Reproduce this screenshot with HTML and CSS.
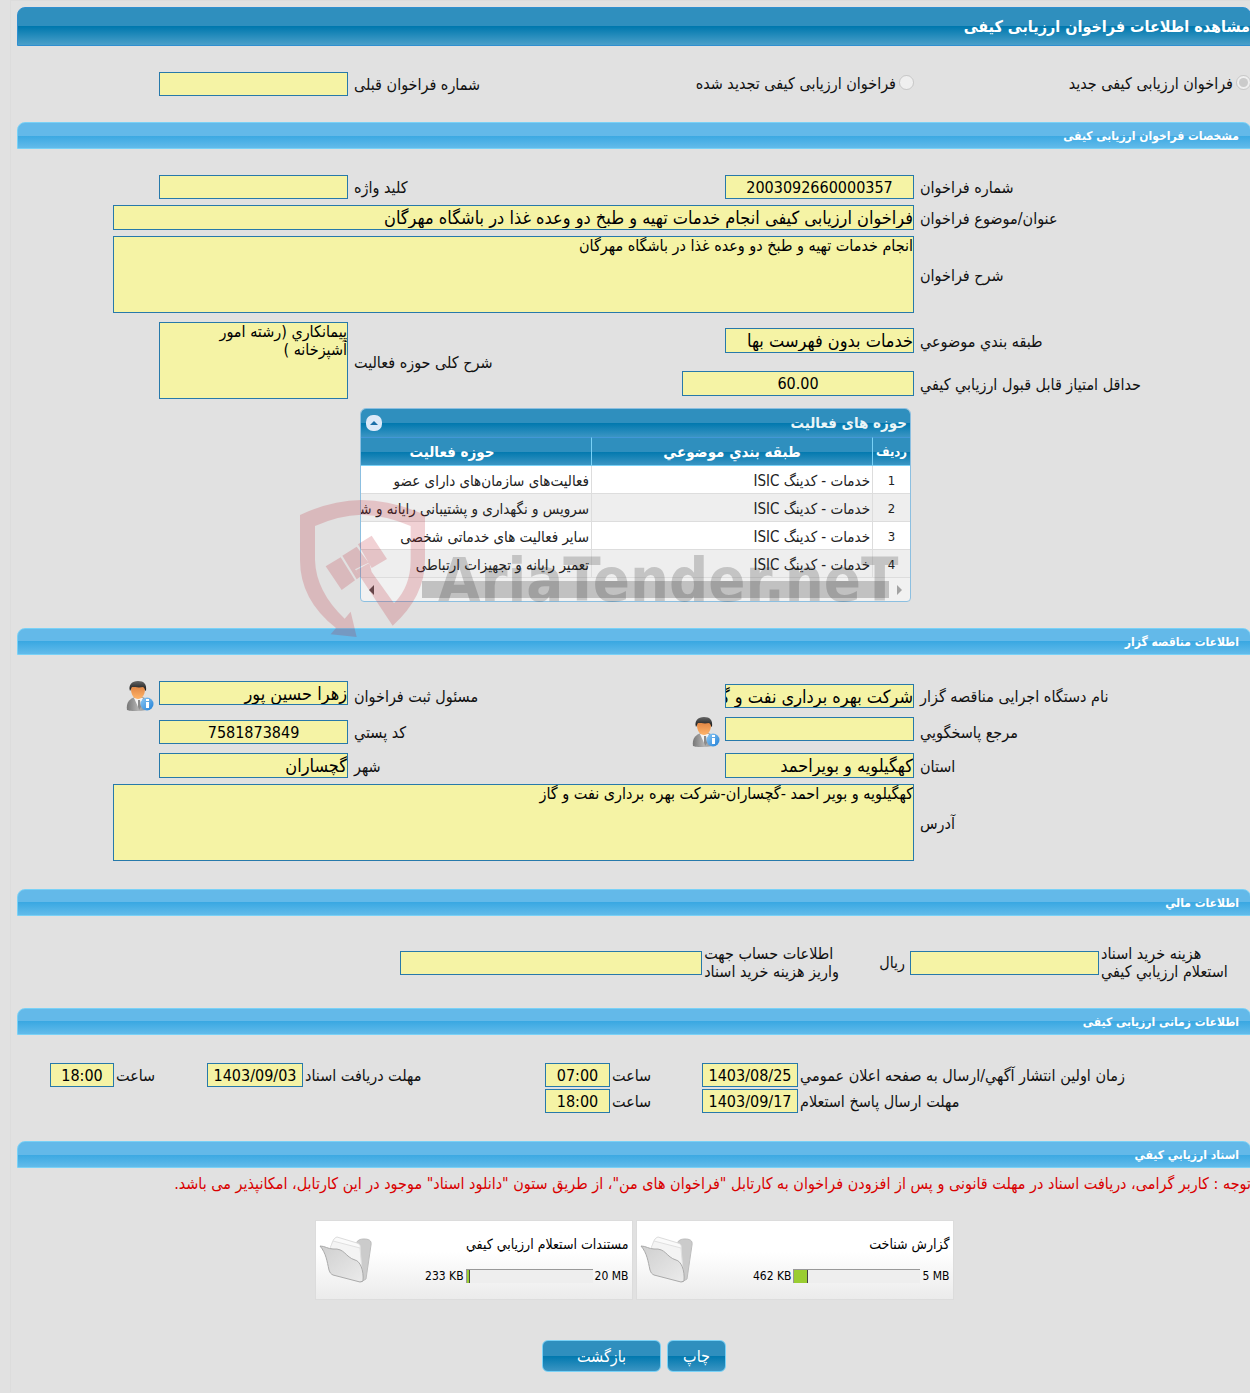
FILE: index.html
```html
<!DOCTYPE html>
<html lang="fa" dir="rtl">
<head>
    <meta charset="UTF-8">
    <meta name="viewport" content="width=device-width, initial-scale=1.0">
    <title>مشاهده اطلاعات فراخوان ارزیابی کیفی</title>
    <link rel="stylesheet" href="styles.css">
</head>
<body>
    <svg class="defs" width="0" height="0" aria-hidden="true">
        <defs>
            <linearGradient id="suit" x1="0" y1="0" x2="1" y2="0">
                <stop offset="0" stop-color="#777"/><stop offset="0.5" stop-color="#b5b5b5"/><stop offset="1" stop-color="#777"/>
            </linearGradient>
            <linearGradient id="hair" x1="0" y1="0" x2="0" y2="1">
                <stop offset="0" stop-color="#666"/><stop offset="1" stop-color="#111"/>
            </linearGradient>
            <linearGradient id="skin" x1="0" y1="0" x2="0" y2="1">
                <stop offset="0" stop-color="#d9793a"/><stop offset="1" stop-color="#ffb469"/>
            </linearGradient>
            <linearGradient id="info" x1="0" y1="0" x2="1" y2="1">
                <stop offset="0" stop-color="#8fcaf5"/><stop offset="1" stop-color="#1f7fd6"/>
            </linearGradient>
            <linearGradient id="fold" x1="0" y1="0" x2="1" y2="1">
                <stop offset="0" stop-color="#cfcfcf"/><stop offset="1" stop-color="#ebebeb"/>
            </linearGradient>
            <symbol id="person" viewBox="0 0 28 30">
                <path d="M1 29C0 22 3 18 9 16h7c5 1 8 5 8 12-6 2-18 3-23 1z" fill="url(#suit)"/>
                <path d="M8 17l5 11 4-11z" fill="#f4f4f4"/>
                <path d="M12 19h2l1 7-2 3-1-3z" fill="#8b8b8b"/>
                <path d="M5 8c0-4 3-6 7-6s7 2 7 6c0 6-3 10-7 10S5 14 5 8z" fill="url(#skin)"/>
                <path d="M4 10C2 4 6 0 12 0s9 3 8 10c-1 0-1-3-3-4-4 1-8 0-11 0-1 1-1 3-2 4z" fill="url(#hair)"/>
                <circle cx="21" cy="23" r="6.500" fill="url(#info)"/>
                <path d="M20 18h3v2h-3zM20 21h3v6h-3z" fill="#fff"/>
            </symbol>
            <symbol id="folder" viewBox="0 0 54 48">
                <path d="M36 8c3-4 5-5 9-5s8 1 7 6l-5 34-5 3-10-8z" fill="#cbcbcb" stroke="#bdbdbd"/>
                <path d="M13 10c0-5 2-8 5-9l20 6c3 1 4 3 3 6l-1 18z" fill="#fafafa" stroke="#dcdcdc"/>
                <path d="M11 12l3-7 27 7 2 22z" fill="#f4f4f4" stroke="#e0e0e0"/>
                <path d="M1 10c5 0 8 3 13 3 12-1 12 8 22 11 5 1 9 10 8 21l-3 1-27-7c-2-1-3-2-4-5-2-9-3-17-9-24z" fill="url(#fold)" stroke="#aaa"/>
            </symbol>
        </defs>
    </svg>

    <main class="panel">
        <h1 class="page-title">مشاهده اطلاعات فراخوان ارزیابی کیفی</h1>

        <div class="section-body form-grid">
            <div class="radio-item">
                <input type="radio" name="callType" id="callNew" checked disabled>
                <label for="callNew">فراخوان ارزیابی کیفی جدید</label>
            </div>
            <div class="radio-item">
                <input type="radio" name="callType" id="callRenewed" disabled>
                <label for="callRenewed">فراخوان ارزیابی کیفی تجدید شده</label>
            </div>
            <label for="prevNumber">شماره فراخوان قبلی</label>
            <div class="field"><input type="text" id="prevNumber" readonly></div>
        </div>

        <h2 class="section-title">مشخصات فراخوان ارزیابی کیفی</h2>
        <div class="section-body">
            <div class="form-grid">
                <label for="callNumber">شماره فراخوان</label>
                <div class="field"><input type="text" id="callNumber" class="number" value="2003092660000357" readonly></div>
                <label for="keyword">کلید واژه</label>
                <div class="field"><input type="text" id="keyword" readonly></div>

                <label for="subject">عنوان/موضوع فراخوان</label>
                <div class="field wide"><input type="text" id="subject" class="tall" value="فراخوان ارزیابی کیفی انجام خدمات تهیه و طبخ دو وعده غذا در باشگاه مهرگان" readonly></div>

                <label for="description">شرح فراخوان</label>
                <div class="field wide"><textarea id="description" readonly>انجام خدمات تهیه و طبخ دو وعده غذا در باشگاه مهرگان</textarea></div>
            </div>
            <div class="form-grid activity-grid">
                <label for="category">طبقه بندي موضوعي</label>
                <div class="field"><input type="text" id="category" class="tall" value="خدمات بدون فهرست بها" readonly></div>
                <label for="activity" class="two-rows">شرح کلی حوزه فعالیت</label>
                <div class="field two-rows"><textarea id="activity" readonly>پیمانکاري (رشته امور
آشپزخانه )</textarea></div>

                <label for="minScore">حداقل امتیاز قابل قبول ارزیابي کیفي</label>
                <div class="field"><input type="text" id="minScore" class="number score tall" value="60.00" readonly></div>

                <div class="activity-box">
                    <div class="box-title">
                        <span>حوزه های فعالیت</span>
                        <button type="button" class="collapse" aria-label="بستن">
                            <svg width="16" height="16" viewBox="0 0 16 16"><rect width="16" height="16" rx="7" fill="#dce9f8"/><path d="M4 10l4-4 4 4z" fill="#1b6fa8"/></svg>
                        </button>
                    </div>
                    <table>
                        <thead>
                            <tr><th class="col-row">ردیف</th><th class="col-cat">طبقه بندي موضوعي</th><th>حوزه فعالیت</th></tr>
                        </thead>
                        <tbody>
                            <tr><td>1</td><td>خدمات - کدینگ ISIC</td><td>فعالیت‌های سازمان‌های دارای عضو</td></tr>
                            <tr><td>2</td><td>خدمات - کدینگ ISIC</td><td>سرویس و نگهداری و پشتیبانی رایانه و شبکه</td></tr>
                            <tr><td>3</td><td>خدمات - کدینگ ISIC</td><td>سایر فعالیت های خدماتی شخصی</td></tr>
                            <tr><td>4</td><td>خدمات - کدینگ ISIC</td><td>تعمیر رایانه و تجهیزات ارتباطی</td></tr>
                        </tbody>
                    </table>
                    <div class="scrollbar">
                        <span class="arrow right"></span>
                        <span class="thumb"></span>
                        <span class="arrow left"></span>
                    </div>
                    <div class="watermark" dir="ltr" aria-hidden="true">
                        <svg width="140" height="147" viewBox="0 279 420 441" fill="#be1e2d">
                            <path d="M30 345Q120 302 215 300Q312 302 405 345V480Q405 590 308 677L198 511 238 489 245 516 312 610Q362 560 362 480V378Q290 346 215 344Q145 346 75 378V480Q78 575 164 656L182 635 200 711 122 703 138 684Q30 600 30 480z"/>
                            <path d="M107 499L152 472 195 541 155 570zM157 467L200 440 236 488 195 508 213 529 200 538zM204 433L245 407 291 477 245 504z"/>
                        </svg>
                        <span>AriaTender.neT</span>
                    </div>
                </div>
            </div>
        </div>

        <h2 class="section-title">اطلاعات مناقصه گزار</h2>
        <div class="section-body organizer">
            <div class="form-grid">
                <label for="orgName">نام دستگاه اجرایی مناقصه گزار</label>
                <div class="field"><input type="text" id="orgName" value="شرکت بهره برداری نفت و گاز گچساران" readonly></div>
                <label for="registrar">مسئول ثبت فراخوان</label>
                <div class="field with-icon">
                    <input type="text" id="registrar" value="زهرا حسین پور" readonly>
                    <svg class="person"><use href="#person"/></svg>
                </div>

                <label for="contact">مرجع پاسخگویي</label>
                <div class="field with-icon">
                    <input type="text" id="contact" readonly>
                    <svg class="person"><use href="#person"/></svg>
                </div>
                <label for="postCode">کد پستي</label>
                <div class="field"><input type="text" id="postCode" class="number" value="7581873849" readonly></div>

                <label for="province">استان</label>
                <div class="field"><input type="text" id="province" class="tall" value="کهگیلویه و بویراحمد" readonly></div>
                <label for="city">شهر</label>
                <div class="field"><input type="text" id="city" class="tall" value="گچساران" readonly></div>

                <label for="address">آدرس</label>
                <div class="field wide"><textarea id="address" readonly>کهگیلویه و بویر احمد -گچساران-شرکت بهره برداری نفت و گاز</textarea></div>
            </div>
        </div>

        <h2 class="section-title">اطلاعات مالي</h2>
        <div class="section-body finance">
            <label for="docCost">هزینه خرید اسناد<br>استعلام ارزیابي کیفي</label>
            <input type="text" id="docCost" readonly>
            <span class="unit">ریال</span>
            <label for="account">اطلاعات حساب جهت<br>واریز هزینه خرید اسناد</label>
            <input type="text" id="account" class="account" readonly>
        </div>

        <h2 class="section-title">اطلاعات زمانی ارزیابی کیفی</h2>
        <div class="section-body time-grid">
            <label for="publishDate">زمان اولین انتشار آگهي/ارسال به صفحه اعلان عمومي</label>
            <input type="text" id="publishDate" class="number" value="1403/08/25" readonly>
            <label for="publishHour">ساعت</label>
            <input type="text" id="publishHour" class="number" value="07:00" readonly>
            <label for="receiveDate">مهلت دریافت اسناد</label>
            <input type="text" id="receiveDate" class="number" value="1403/09/03" readonly>
            <label for="receiveHour">ساعت</label>
            <input type="text" id="receiveHour" class="number" value="18:00" readonly>

            <label for="replyDate" class="new-row">مهلت ارسال پاسخ استعلام</label>
            <input type="text" id="replyDate" class="number" value="1403/09/17" readonly>
            <label for="replyHour">ساعت</label>
            <input type="text" id="replyHour" class="number" value="18:00" readonly>
        </div>

        <h2 class="section-title">اسناد ارزیابي کیفي</h2>
        <p class="notice">توجه : کاربر گرامی، دریافت اسناد در مهلت قانونی و پس از افزودن فراخوان به کارتابل "فراخوان های من"، از طریق ستون "دانلود اسناد" موجود در این کارتابل، امکانپذیر می باشد.</p>

        <div class="documents">
            <div class="document">
                <div class="document-info">
                    <div class="document-name">گزارش شناخت</div>
                    <div class="usage">
                        <span>5 MB</span>
                        <div class="bar"><div class="bar-fill" style="width: 11%"></div></div>
                        <span>462 KB</span>
                    </div>
                </div>
                <svg class="folder"><use href="#folder"/></svg>
            </div>
            <div class="document">
                <div class="document-info">
                    <div class="document-name">مستندات استعلام ارزیابي کیفي</div>
                    <div class="usage">
                        <span>20 MB</span>
                        <div class="bar"><div class="bar-fill" style="width: 3%"></div></div>
                        <span>233 KB</span>
                    </div>
                </div>
                <svg class="folder"><use href="#folder"/></svg>
            </div>
        </div>

        <div class="actions">
            <button type="button" class="btn">چاپ</button>
            <button type="button" class="btn btn-back">بازگشت</button>
        </div>
    </main>
</body>
</html>
```

FILE: styles.css
```css
* {
    box-sizing: border-box;
}

body {
    margin: 0;
    padding-left: 10px;
    background-color: #e1e1e1;
    font-family: "DejaVu Sans Condensed", "DejaVu Sans", sans-serif;
    font-size: 16px;
    line-height: 18px;
    color: #111;
    overflow-x: hidden;
}

.defs {
    position: absolute;
}

.panel {
    margin-right: -1px;
    padding: 6px 0 20px 6px;
    border: 1px solid #dcdcdc;
    border-right: none;
    border-bottom: none;
}

.page-title {
    margin: 0;
    height: 39px;
    border: 1px solid #2f8fd0;
    border-radius: 8px 8px 0 0;
    background: linear-gradient(#2f8fbe 50%, #0078ae 50%, #4a9fc9);
    color: #fff;
    font-size: 16px;
    line-height: 37px;
}

.section-title {
    margin: 0;
    padding-right: 11px;
    height: 27px;
    border: 1px solid #79d1f6;
    border-radius: 8px 8px 0 0;
    background: linear-gradient(#63b9e9 50%, #3aa8e2 50%, #62bbea);
    color: #fff;
    font-size: 12px;
    line-height: 27px;
}

.section-body {
    padding: 26px 0;
}

.organizer {
    padding-bottom: 28px;
}

/* label / field / label / field */
.form-grid {
    display: grid;
    grid-template-columns: 337fr 414fr 152fr 331fr;
    row-gap: 6px;
    align-items: center;
}

.form-grid label,
.time-grid label {
    text-align: left;
    white-space: nowrap;
}

.form-grid > label {
    padding-top: 2px;
    padding-left: 6px;
}

.radio-item {
    display: flex;
    gap: 3px;
}

.radio-item input {
    margin: 0;
    width: 15px;
    height: 15px;
}

.field.wide {
    grid-column: 2 / 5;
}

input[type="text"],
textarea {
    display: block;
    width: 189px;
    height: 24px;
    margin: 0;
    padding: 0;
    border: 1px solid #2779aa;
    border-radius: 0;
    background-color: #f5f3a5;
    color: #000;
    font-family: inherit;
    font-size: 18px;
    outline: none;
}

textarea {
    height: 77px;
    font-size: 16px;
    line-height: 18px;
    resize: none;
    overflow: hidden;
}

input[type="text"].number {
    font-size: 16px;
    text-align: center;
}

input[type="text"].tall {
    height: 25px;
}

input[type="text"].score {
    width: 232px;
}

.wide input[type="text"],
.wide textarea {
    width: 801px;
    max-width: 100%;
}

.activity-grid {
    margin-top: 9px;
    grid-template-rows: 37px 37px auto;
}

.two-rows {
    grid-row: 1 / 3;
}

label.two-rows {
    grid-column: 3;
}

.field.two-rows {
    grid-column: 4;
    align-self: start;
}

.with-icon {
    display: flex;
    gap: 5px;
}

.person {
    width: 28px;
    height: 30px;
}

/* activity table */
.activity-box {
    grid-column: 2 / 5;
    position: relative;
    width: 551px;
    margin-right: 3px;
    border: 1px solid #8cbfe0;
    border-radius: 6px 6px 4px 4px;
    background-color: #f1f1f1;
}

.box-title {
    display: flex;
    justify-content: space-between;
    align-items: center;
    height: 28px;
    padding: 0 3px 0 5px;
    border-radius: 5px 5px 0 0;
    background: linear-gradient(#2f8fbe 50%, #0078ae 50%, #3b95c3);
    color: #eaf5f7;
    font-size: 15px;
    font-weight: bold;
}

.collapse {
    width: 16px;
    height: 16px;
    padding: 0;
    border: none;
    background: none;
}

.collapse svg {
    display: block;
}

table {
    width: 100%;
    table-layout: fixed;
    border-collapse: separate;
    border-spacing: 0;
    font-size: 15px;
}

th {
    height: 29px;
    padding: 0;
    border-top: 1px solid #4297d7;
    border-bottom: 1px solid #79d1f6;
    border-left: 1px solid #79d1f6;
    background: linear-gradient(#2f8fbe 50%, #0078ae 50%, #3b95c3);
    color: #fff;
    font-size: 15px;
}

th.col-row {
    width: 38px;
    font-size: 13px;
}

.col-cat {
    width: 281px;
}

th:last-child,
td:last-child {
    border-left: none;
}

th:last-child {
    padding-right: 0;
    padding-left: 0;
    padding-right: 48px;
}

td {
    height: 28px;
    padding: 3px 2px 0;
    border-bottom: 1px solid #ddd;
    border-left: 1px solid #ddd;
    background-color: #fff;
    color: #222;
    white-space: nowrap;
    overflow: hidden;
}

td:first-child {
    font-size: 13px;
    text-align: center;
}

tr:nth-child(even) td {
    background-color: #eee;
}

.scrollbar {
    display: flex;
    align-items: center;
    justify-content: space-between;
    height: 23px;
    padding: 0 8px;
}

.thumb {
    flex: 1;
    height: 17px;
    margin-right: 8px;
    margin-left: 48px;
    background-color: #c1c1c1;
}

.arrow {
    border: 5px solid transparent;
}

.arrow.left {
    border-left: none;
    border-right-color: #505050;
}

.arrow.right {
    border-right: none;
    border-left-color: #a3a3a3;
}

.watermark {
    position: absolute;
    left: -71px;
    top: 84px;
    display: flex;
    align-items: flex-end;
    gap: 8px;
    opacity: 0.2;
    color: #222;
    font-size: 61px;
    font-weight: bold;
    line-height: 80px;
    white-space: nowrap;
    pointer-events: none;
}

.watermark span {
    margin-bottom: 20px;
}

/* finance */
.finance {
    display: flex;
    align-items: center;
    padding-top: 29px;
    padding-right: 13px;
    padding-bottom: 27px;
}

.finance label {
    width: 137px;
    margin-left: 2px;
    text-align: left;
    white-space: nowrap;
}

.finance .unit {
    min-width: 24px;
    margin-right: 5px;
    margin-left: 38px;
}

.finance input[type="text"].account {
    width: 302px;
}

/* dates and hours */
.time-grid {
    display: grid;
    grid-template-columns: 452fr 96px 90fr 65px 240fr 96px 91fr 64px 32fr;
    column-gap: 1px;
    row-gap: 2px;
    align-items: center;
    padding: 28px 0;
}

.time-grid label {
    padding-top: 2px;
    padding-left: 1px;
}

.time-grid input[type="text"] {
    width: 100%;
}

.new-row {
    grid-column: 1;
}

/* documents */
.notice {
    margin: 0;
    padding-top: 7px;
    color: #d90000;
    white-space: nowrap;
}

.documents {
    display: flex;
    justify-content: center;
    gap: 3px;
    margin-top: 27px;
}

.document {
    display: flex;
    justify-content: space-between;
    align-items: center;
    width: 318px;
    height: 80px;
    padding: 0 3px;
    border: 1px solid #dcdcdc;
    background: linear-gradient(#fff 40%, #ebebeb);
    color: #000;
    font-size: 12px;
}

.document-name {
    margin-bottom: 14px;
    font-size: 14px;
}

.usage {
    display: flex;
    align-items: center;
    gap: 2px;
}

.usage span {
    direction: ltr;
}

.bar {
    width: 127px;
    height: 14px;
    border-top: 1px solid #999;
    border-left: 1px solid #999;
    background-color: #eee;
    direction: ltr;
}

.bar-fill {
    height: 100%;
    border-right: 1px solid #444;
    background-color: #9acd32;
}

.folder {
    width: 54px;
    height: 48px;
}

.actions {
    display: flex;
    justify-content: center;
    gap: 6px;
    margin-top: 40px;
}

.btn {
    min-width: 59px;
    height: 32px;
    padding: 0 15px;
    border: 1px solid #79d1f6;
    border-radius: 6px;
    background: linear-gradient(#2f8fbe 50%, #0078ae 50%, #3b95c3);
    color: #fff;
    font-family: inherit;
    font-size: 16px;
}

.btn-back {
    min-width: 119px;
    padding: 0 32px;
}
```
